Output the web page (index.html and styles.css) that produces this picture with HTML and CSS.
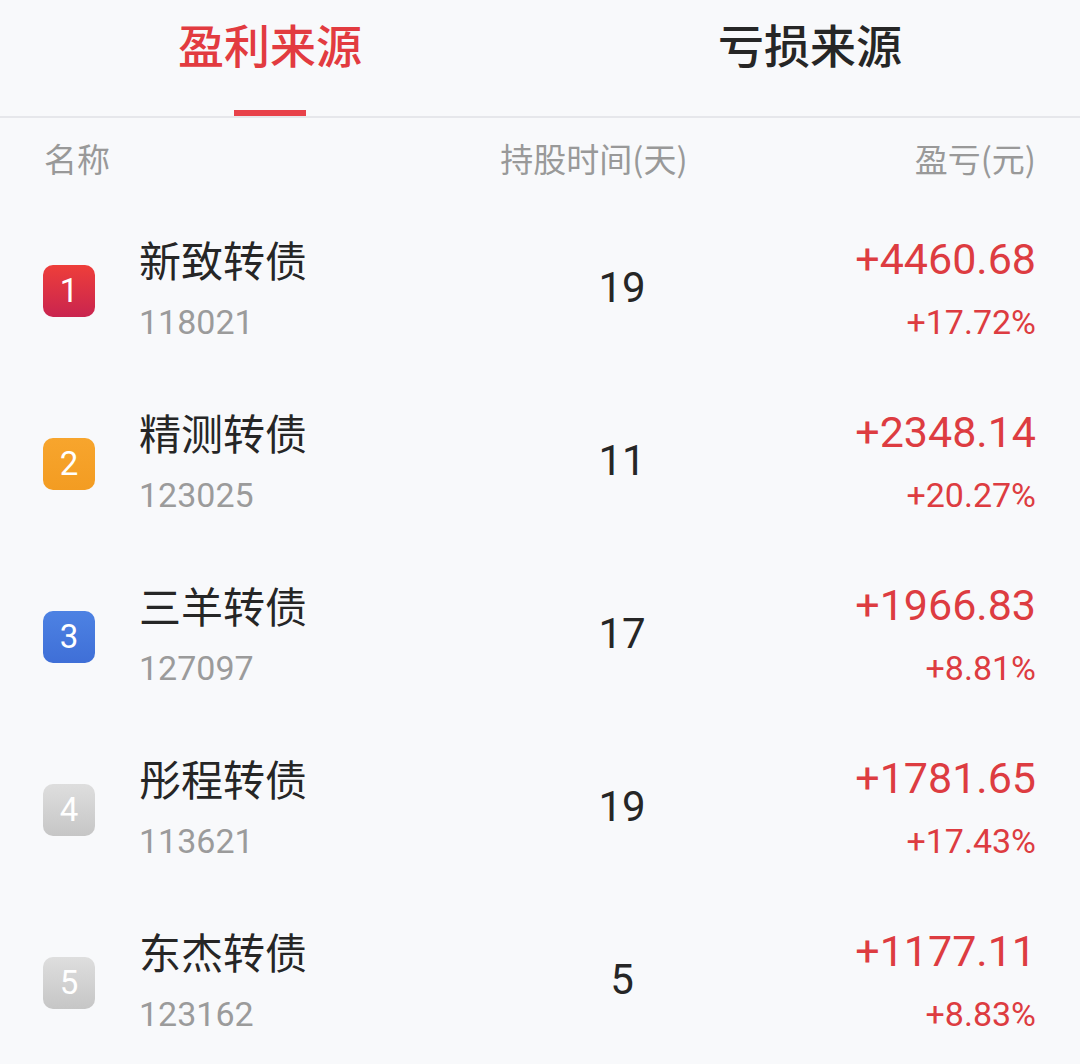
FILE: index.html
```html
<!DOCTYPE html>
<html lang="zh-CN">
<head>
<meta charset="utf-8">
<title>盈利来源</title>
<link rel="stylesheet" href="styles.css">
</head>
<body>
<div class="page">
  <nav class="tabs">
    <div class="tab active"><span class="tab-label">盈利来源</span><span class="tab-bar"></span></div>
    <div class="tab"><span class="tab-label">亏损来源</span></div>
  </nav>
  <div class="head">
    <span class="h-name">名称</span>
    <span class="h-days">持股时间(天)</span>
    <span class="h-pl">盈亏(元)</span>
  </div>
  <ul class="list">
    <li class="row">
      <span class="badge b1">1</span>
      <div class="name-col"><div class="name">新致转债</div><div class="code">118021</div></div>
      <div class="days">19</div>
      <div class="pl-col"><div class="amt">+4460.68</div><div class="pct">+17.72%</div></div>
    </li>
    <li class="row">
      <span class="badge b2">2</span>
      <div class="name-col"><div class="name">精测转债</div><div class="code">123025</div></div>
      <div class="days">11</div>
      <div class="pl-col"><div class="amt">+2348.14</div><div class="pct">+20.27%</div></div>
    </li>
    <li class="row">
      <span class="badge b3">3</span>
      <div class="name-col"><div class="name">三羊转债</div><div class="code">127097</div></div>
      <div class="days">17</div>
      <div class="pl-col"><div class="amt">+1966.83</div><div class="pct">+8.81%</div></div>
    </li>
    <li class="row">
      <span class="badge b4">4</span>
      <div class="name-col"><div class="name">彤程转债</div><div class="code">113621</div></div>
      <div class="days">19</div>
      <div class="pl-col"><div class="amt">+1781.65</div><div class="pct">+17.43%</div></div>
    </li>
    <li class="row">
      <span class="badge b5">5</span>
      <div class="name-col"><div class="name">东杰转债</div><div class="code">123162</div></div>
      <div class="days">5</div>
      <div class="pl-col"><div class="amt">+1177.11</div><div class="pct">+8.83%</div></div>
    </li>
  </ul>
</div>
</body>
</html>
```
FILE: styles.css
```css
* { box-sizing: border-box; }
html, body { margin: 0; padding: 0; }
body {
  background: #f8f9fb;
  font-family: Roboto, "Noto Sans CJK SC", sans-serif;
  color: #222;
}
.page { width: 1080px; height: 1064px; overflow: hidden; }

.tabs {
  display: flex;
  height: 118px;
  border-bottom: 2px solid #e6e7eb;
}
.tab {
  flex: 1;
  display: flex;
  flex-direction: column;
  align-items: center;
  padding-top: 18px;
}
.tab-label {
  font-family: "Noto Sans CJK SC", sans-serif;
  font-size: 46px;
  line-height: 50px;
  font-weight: 500;
  color: #262626;
}
.tab.active .tab-label { color: #e23b40; }
.tab-bar {
  margin-top: auto;
  width: 72px;
  height: 6px;
  background: #e8424a;
}

.head {
  display: grid;
  grid-template-columns: 400px 300px 1fr;
  align-items: center;
  height: 86px;
  padding: 0 44px 6px;
  font-family: "Noto Sans CJK SC", sans-serif;
  font-size: 33px;
  color: #999;
}
.h-days { text-align: center; }
.h-pl { text-align: right; }

.list { list-style: none; margin: 0; padding: 0; }
.row {
  display: grid;
  grid-template-columns: 96px 403px 160px 1fr;
  align-items: center;
  height: 173px;
  padding: 0 44px 0 43px;
}
.badge {
  width: 52px;
  height: 52px;
  border-radius: 10px;
  display: flex;
  align-items: center;
  justify-content: center;
  color: #fff;
  font-size: 33px;
  line-height: 1;
}
.b1 { background: linear-gradient(#ee3e3a, #c9244f); }
.b2 { background: linear-gradient(#f7a52d, #f39c22); }
.b3 { background: linear-gradient(#4d82e3, #3f6fd7); }
.b4, .b5 { background: linear-gradient(#dedede, #c6c6c6); }

.name-col, .pl-col, .days { margin-bottom: 6px; }
.name-col, .pl-col { display: flex; flex-direction: column; }
.pl-col { align-items: flex-end; }
.name {
  font-family: "Noto Sans CJK SC", sans-serif;
  font-size: 42px;
  line-height: 56px;
  color: #262626;
}
.code {
  margin-top: 13px;
  font-size: 34px;
  line-height: 44px;
  color: #9b9b9b;
}
.days {
  text-align: center;
  font-size: 42px;
  line-height: 56px;
  color: #262626;
}
.amt {
  font-size: 43px;
  line-height: 56px;
  color: #dd3c41;
}
.pct {
  margin-top: 13px;
  font-size: 34px;
  line-height: 44px;
  color: #dd3c41;
}
```
